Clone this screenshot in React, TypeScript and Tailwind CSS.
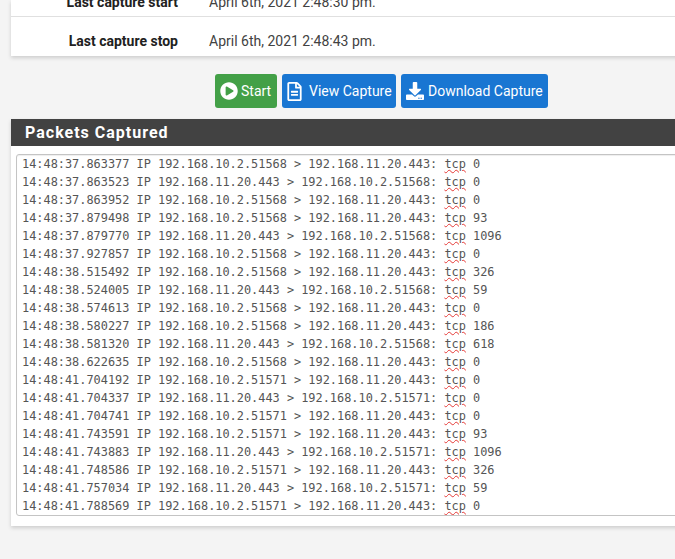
import { FaPlayCircle, FaRegFileAlt, FaDownload } from "react-icons/fa";

const a = "192.168.10.2";
const b = "192.168.11.20";
const lines: [string, string, string, string][] = [
  ["37.863377", "51568", "out", "0"],
  ["37.863523", "51568", "in", "0"],
  ["37.863952", "51568", "out", "0"],
  ["37.879498", "51568", "out", "93"],
  ["37.879770", "51568", "in", "1096"],
  ["37.927857", "51568", "out", "0"],
  ["38.515492", "51568", "out", "326"],
  ["38.524005", "51568", "in", "59"],
  ["38.574613", "51568", "out", "0"],
  ["38.580227", "51568", "out", "186"],
  ["38.581320", "51568", "in", "618"],
  ["38.622635", "51568", "out", "0"],
  ["41.704192", "51571", "out", "0"],
  ["41.704337", "51571", "in", "0"],
  ["41.704741", "51571", "out", "0"],
  ["41.743591", "51571", "out", "93"],
  ["41.743883", "51571", "in", "1096"],
  ["41.748586", "51571", "out", "326"],
  ["41.757034", "51571", "in", "59"],
  ["41.788569", "51571", "out", "0"],
];

export default function App() {
  return (
    <div className="h-[559px] w-[675px] overflow-hidden bg-[#f4f4f4] pl-[11px] font-['Roboto',sans-serif] text-[14px]">
      <div className="w-[741px] bg-white shadow-[0_2px_4px_rgba(0,0,0,0.16)]">
        <div className="flex h-[16px] items-end pb-[4px]">
          <div className="w-[167px] shrink-0 text-right font-bold leading-[20px] text-[#212121]">Last capture start</div>
          <div className="ml-[31px] leading-[20px] text-[#424242]">April 6th, 2021 2:48:30 pm.</div>
        </div>
        <div className="h-px bg-[#e0e0e0]" />
        <div className="flex h-[39px] items-start pt-[14px]">
          <div className="w-[167px] shrink-0 text-right font-bold leading-[20px] text-[#212121]">Last capture stop</div>
          <div className="ml-[31px] leading-[20px] text-[#424242]">April 6th, 2021 2:48:43 pm.</div>
        </div>
      </div>

      <div className="mt-[18px] flex w-[741px] justify-center gap-[5px]">
        <button className="flex h-[34px] w-[62px] items-center gap-[3px] rounded-[3px] bg-[#43a047] pl-[5px] text-white">
          <FaPlayCircle className="h-[18px] w-[18px]" />
          <span>Start</span>
        </button>
        <button className="flex h-[34px] w-[114px] items-center rounded-[3px] bg-[#1976d2] pl-[5px] text-white">
          <FaRegFileAlt className="h-[19px] w-[15px]" />
          <span className="ml-[7px]">View Capture</span>
        </button>
        <button className="flex h-[34px] w-[147px] items-center rounded-[3px] bg-[#1976d2] pl-[5px] text-white">
          <FaDownload className="h-[18px] w-[18px]" />
          <span className="ml-[4px]">Download Capture</span>
        </button>
      </div>

      <div className="mt-[11px] w-[741px] bg-white shadow-[0_2px_4px_rgba(0,0,0,0.16)]">
        <div className="h-[27px] bg-[#424242] pl-[14px] text-[16px] font-bold leading-[28px] tracking-[1px] text-white">
          Packets Captured
        </div>
        <div className="px-[5px] pt-[8px] pb-[10px]">
          <div className="h-[362px] overflow-hidden rounded-[3px] border border-[#c4c4c4] pl-[5px] font-['DejaVu_Sans_Mono',monospace] text-[11.9px] leading-[18px] whitespace-pre text-[#555555] shadow-[inset_0_1px_1px_rgba(0,0,0,0.07)]">
            {lines.map(([t, port, dir, n]) => (
              <div key={t} className="h-[18px]">
                {`14:48:${t} IP `}
                {dir === "out" ? `${a}.${port} > ${b}.443: ` : `${b}.443 > ${a}.${port}: `}
                <span className="underline decoration-[#e53935] decoration-wavy decoration-1">tcp</span>
                {` ${n}`}
              </div>
            ))}
          </div>
        </div>
      </div>
    </div>
  );
}
